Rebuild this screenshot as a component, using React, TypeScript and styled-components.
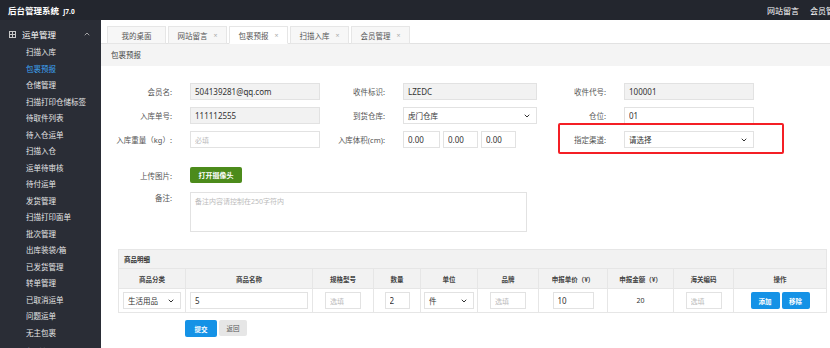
import styled, { createGlobalStyle } from 'styled-components';
import { ChevronDown, ChevronUp } from 'lucide-react';

const GlobalStyle = createGlobalStyle`
  html, body {
    margin: 0;
    padding: 0;
    width: 830px;
    height: 348px;
    overflow: hidden;
    font-family: "Noto Sans", "Noto Sans CJK SC", sans-serif;
    color: #333;
  }
  * {
    box-sizing: border-box;
  }
`;

const menuItems = [
  '扫描入库',
  '包裹预报',
  '仓储管理',
  '扫描打印仓储标签',
  '待取件列表',
  '待入仓运单',
  '扫描入仓',
  '运单待审核',
  '待付运单',
  '发货管理',
  '扫描打印面单',
  '批次管理',
  '出库装袋/箱',
  '已发货管理',
  '转单管理',
  '已取消运单',
  '问题运单',
  '无主包裹',
];

const tabs = [
  { name: '我的桌面', closable: false },
  { name: '网站留言', closable: true },
  { name: '包裹预报', closable: true, active: true },
  { name: '扫描入库', closable: true },
  { name: '会员管理', closable: true },
];

const columns = [
  { title: '商品分类', width: 67 },
  { title: '商品名称', width: 127 },
  { title: '规格型号', width: 61 },
  { title: '数量', width: 47 },
  { title: '单位', width: 57 },
  { title: '品牌', width: 61 },
  { title: '申报单价（¥）', width: 69 },
  { title: '申报金额（¥）', width: 66 },
  { title: '海关编码', width: 60 },
  { title: '操作', width: 93 },
];

function GridIcon() {
  return (
    <svg width="7" height="7" viewBox="0 0 7 7">
      <rect x="0.5" y="0.5" width="6" height="6" fill="none" stroke="#c8c8c8" />
      <line x1="0.5" y1="3.5" x2="6.5" y2="3.5" stroke="#c8c8c8" />
      <line x1="3.5" y1="0.5" x2="3.5" y2="6.5" stroke="#c8c8c8" />
    </svg>
  );
}

function App() {
  return (
    <Page>
      <GlobalStyle />
      <TopBar>
        <Brand>
          后台管理系统 <Version>J7.0</Version>
        </Brand>
        <TopNav>
          <TopNavItem>网站留言</TopNavItem>
          <TopNavItem>会员管理</TopNavItem>
        </TopNav>
      </TopBar>
      <Body>
        <Sidebar>
          <MenuHead>
            <GridIcon />
            <MenuHeadText>运单管理</MenuHeadText>
            <ChevronUp size={8} strokeWidth={2.5} color="#bbb" />
          </MenuHead>
          {menuItems.map((item) => (
            <MenuItem key={item} $active={item === '包裹预报'}>
              {item}
            </MenuItem>
          ))}
          <MenuHead>
            <GridIcon />
            <MenuHeadText>财务管理</MenuHeadText>
            <ChevronDown size={8} strokeWidth={2.5} color="#bbb" />
          </MenuHead>
        </Sidebar>
        <Main>
          <TabBar>
            {tabs.map((t) => (
              <Tab key={t.name} $active={!!t.active}>
                {t.name}
                {t.closable && <TabClose>×</TabClose>}
              </Tab>
            ))}
          </TabBar>
          <Crumb>包裹预报</Crumb>
          <Panel>
            <FormRow>
              <Field>
                <Label $w={89}>会员名:</Label>
                <TextInput $w={130} $readonly readOnly value="504139281@qq.com" />
              </Field>
              <Field>
                <Label $w={83}>收件标识:</Label>
                <TextInput $w={134} $readonly readOnly value="LZEDC" />
              </Field>
              <Field>
                <Label $w={87}>收件代号:</Label>
                <TextInput $w={130} $readonly readOnly value="100001" />
              </Field>
            </FormRow>
            <FormRow>
              <Field>
                <Label $w={89}>入库单号:</Label>
                <TextInput $w={130} $readonly readOnly value="111112555" />
              </Field>
              <Field>
                <Label $w={83}>到货仓库:</Label>
                <SelectBox $w={134}>
                  虎门仓库
                  <ChevronDown size={8} strokeWidth={3} color="#333" />
                </SelectBox>
              </Field>
              <Field>
                <Label $w={87}>仓位:</Label>
                <TextInput $w={130} readOnly value="01" />
              </Field>
            </FormRow>
            <FormRow>
              <Field>
                <Label $w={89}>入库重量（kg）:</Label>
                <TextInput $w={130} placeholder="必填" />
              </Field>
              <Field>
                <Label $w={83}>入库体积(cm):</Label>
                <VolumeGroup>
                  <TextInput $w={37} readOnly value="0.00" />
                  <TextInput $w={35} readOnly value="0.00" />
                  <TextInput $w={35} readOnly value="0.00" />
                </VolumeGroup>
              </Field>
              <ChannelField>
                <Label $w={87}>指定渠道:</Label>
                <SelectBox $w={130}>
                  请选择
                  <ChevronDown size={8} strokeWidth={3} color="#333" />
                </SelectBox>
                <RedFrame />
              </ChannelField>
            </FormRow>
            <UploadRow>
              <Label $w={89}>上传图片:</Label>
              <GreenButton>打开摄像头</GreenButton>
            </UploadRow>
            <RemarkRow>
              <Label $w={89}>备注:</Label>
              <Remark placeholder="备注内容请控制在250字符内" />
            </RemarkRow>
            <GoodsTable>
              <colgroup>
                {columns.map((c) => (
                  <col key={c.title} style={{ width: c.width }} />
                ))}
              </colgroup>
              <thead>
                <tr>
                  <Caption colSpan={columns.length}>商品明细</Caption>
                </tr>
                <tr>
                  {columns.map((c) => (
                    <HeadCell key={c.title}>{c.title}</HeadCell>
                  ))}
                </tr>
              </thead>
              <tbody>
                <tr>
                  <Cell>
                    <SelectBox $w={58}>
                      生活用品
                      <ChevronDown size={8} strokeWidth={3} color="#333" />
                    </SelectBox>
                  </Cell>
                  <Cell>
                    <TextInput $w={118} readOnly value="5" />
                  </Cell>
                  <Cell>
                    <TextInput $w={36} placeholder="选填" />
                  </Cell>
                  <Cell>
                    <TextInput $w={25} readOnly value="2" />
                  </Cell>
                  <Cell>
                    <SelectBox $w={50}>
                      件
                      <ChevronDown size={8} strokeWidth={3} color="#333" />
                    </SelectBox>
                  </Cell>
                  <Cell>
                    <TextInput $w={36} placeholder="选填" />
                  </Cell>
                  <Cell>
                    <TextInput $w={41} readOnly value="10" />
                  </Cell>
                  <Cell>20</Cell>
                  <Cell>
                    <TextInput $w={36} placeholder="选填" />
                  </Cell>
                  <Cell>
                    <ActionGroup>
                      <BlueButton $w={29}>添加</BlueButton>
                      <BlueButton $w={28}>移除</BlueButton>
                    </ActionGroup>
                  </Cell>
                </tr>
              </tbody>
            </GoodsTable>
            <SubmitRow>
              <BlueButton $w={32}>提交</BlueButton>
              <GreyButton>返回</GreyButton>
            </SubmitRow>
          </Panel>
        </Main>
      </Body>
    </Page>
  );
}

const Page = styled.div`
  display: flex;
  flex-direction: column;
  width: 830px;
  height: 348px;
  overflow: hidden;
`;

const TopBar = styled.div`
  display: flex;
  align-items: center;
  height: 20px;
  padding-left: 8px;
  background: #23262e;
  color: #fff;
  flex-shrink: 0;
`;

const Brand = styled.div`
  flex: 1;
  font-size: 8.5px;
  font-weight: 700;
  white-space: nowrap;
`;

const Version = styled.span`
  font-size: 6.5px;
  margin-left: 2px;
`;

const TopNav = styled.div`
  display: flex;
  gap: 11px;
  width: 63px;
  flex-shrink: 0;
  overflow: hidden;
  white-space: nowrap;
`;

const TopNavItem = styled.span`
  font-size: 8px;
  color: #fff;
  flex-shrink: 0;
`;

const Body = styled.div`
  display: flex;
  flex: 1;
  min-height: 0;
`;

const Sidebar = styled.div`
  width: 101px;
  flex-shrink: 0;
  background: #2a2d36;
  overflow: hidden;
  padding-top: 4px;
`;

const MenuHead = styled.div`
  display: flex;
  align-items: center;
  height: 20px;
  padding: 0 10px 0 9px;
  color: #fff;
`;

const MenuHeadText = styled.span`
  flex: 1;
  margin-left: 6px;
  font-size: 8.5px;
`;

const MenuItem = styled.div<{ $active: boolean }>`
  height: 16.5px;
  line-height: 16.5px;
  padding-left: 26px;
  font-size: 7.5px;
  white-space: nowrap;
  color: ${(p) => (p.$active ? '#3da4f5' : '#e6e6e6')};
`;

const Main = styled.div`
  display: flex;
  flex-direction: column;
  flex: 1;
  min-width: 0;
  background: #f4f4f4;
`;

const TabBar = styled.div`
  display: flex;
  align-items: flex-end;
  gap: 2px;
  height: 24px;
  padding-left: 6px;
  background: #fff;
  border-bottom: 1px solid #e2e2e2;
  flex-shrink: 0;
`;

const Tab = styled.div<{ $active: boolean }>`
  display: flex;
  align-items: center;
  justify-content: center;
  gap: 6px;
  width: 59px;
  height: 18px;
  margin-bottom: -1px;
  font-size: 7.5px;
  color: #555;
  background: ${(p) => (p.$active ? '#fff' : '#f7f7f7')};
  border: 1px solid #e6e6e6;
  border-bottom-color: ${(p) => (p.$active ? '#fff' : '#e6e6e6')};
`;

const TabClose = styled.span`
  font-size: 7px;
  color: #aaa;
`;

const Crumb = styled.div`
  height: 22px;
  line-height: 22px;
  padding-left: 10px;
  font-size: 7.5px;
  color: #444;
  flex-shrink: 0;
`;

const Panel = styled.div`
  flex: 1;
  background: #fff;
  padding-top: 17px;
`;

const FormRow = styled.div`
  display: flex;
  height: 17px;
  margin-bottom: 7px;
`;

const Field = styled.div`
  display: flex;
  align-items: center;
`;

const ChannelField = styled(Field)`
  position: relative;
`;

const RedFrame = styled.div`
  position: absolute;
  left: 21px;
  top: -8px;
  width: 226px;
  height: 31px;
  border: 2px solid #f41f25;
  border-radius: 2px;
  pointer-events: none;
`;

const Label = styled.label<{ $w: number }>`
  width: ${(p) => p.$w}px;
  flex-shrink: 0;
  padding-right: 18px;
  text-align: right;
  font-size: 7.5px;
  color: #555;
  white-space: nowrap;
`;

const TextInput = styled.input<{ $w: number; $readonly?: boolean }>`
  width: ${(p) => p.$w}px;
  height: 17px;
  padding: 0 4px;
  border: 1px solid #e2e2e2;
  background: ${(p) => (p.$readonly ? '#f2f2f2' : '#fff')};
  font-family: "Noto Sans", "Noto Sans CJK SC", sans-serif;
  font-size: 8px;
  color: #333;
  outline: none;

  &::placeholder {
    color: #bbb;
    font-size: 7px;
  }
`;

const SelectBox = styled.div<{ $w: number }>`
  display: inline-flex;
  align-items: center;
  justify-content: space-between;
  width: ${(p) => p.$w}px;
  height: 17px;
  padding: 0 5px 0 4px;
  border: 1px solid #e2e2e2;
  background: #fff;
  font-size: 7.5px;
  color: #333;
  text-align: left;
  vertical-align: middle;
`;

const VolumeGroup = styled.div`
  display: flex;
  gap: 3px;
  width: 134px;
`;

const UploadRow = styled.div`
  display: flex;
  align-items: center;
  margin-top: 19px;
  height: 16px;
`;

const GreenButton = styled.button`
  width: 52px;
  height: 16px;
  padding: 0;
  border: none;
  border-radius: 2px;
  background: #4c8b1b;
  color: #fff;
  font-family: "Noto Sans CJK SC", sans-serif;
  font-size: 7px;
  font-weight: 700;
`;

const RemarkRow = styled.div`
  display: flex;
  align-items: flex-start;
  margin-top: 9px;
`;

const Remark = styled.textarea`
  width: 337px;
  height: 40px;
  padding: 3px 4px;
  border: 1px solid #e2e2e2;
  resize: none;
  font-family: "Noto Sans", "Noto Sans CJK SC", sans-serif;
  font-size: 7px;
  outline: none;

  &::placeholder {
    color: #bbb;
  }
`;

const GoodsTable = styled.table`
  margin: 17px 0 0 17px;
  width: 708px;
  border-collapse: collapse;
  table-layout: fixed;
`;

const Caption = styled.th`
  height: 19px;
  padding-left: 5px;
  text-align: left;
  font-size: 6.5px;
  font-weight: 700;
  color: #333;
  background: #f2f2f2;
  border: 1px solid #e6e6e6;
`;

const HeadCell = styled.th`
  height: 20px;
  padding: 0;
  text-align: center;
  font-size: 6.5px;
  font-weight: 700;
  color: #444;
  background: #f2f2f2;
  border: 1px solid #e6e6e6;
  white-space: nowrap;
`;

const Cell = styled.td`
  height: 24px;
  padding: 0;
  text-align: center;
  font-size: 7px;
  color: #333;
  border: 1px solid #e6e6e6;
`;

const ActionGroup = styled.div`
  display: flex;
  justify-content: center;
  gap: 2px;
`;

const BlueButton = styled.button<{ $w: number }>`
  width: ${(p) => p.$w}px;
  height: 17px;
  padding: 0;
  border: none;
  border-radius: 2px;
  background: #1592e6;
  color: #fff;
  font-family: "Noto Sans CJK SC", sans-serif;
  font-size: 6.5px;
  font-weight: 700;
`;

const SubmitRow = styled.div`
  display: flex;
  gap: 2px;
  margin: 7px 0 0 84px;
  height: 16px;
`;

const GreyButton = styled.button`
  width: 28px;
  height: 16px;
  padding: 0;
  border: none;
  border-radius: 2px;
  background: #e6e6e6;
  color: #555;
  font-family: "Noto Sans CJK SC", sans-serif;
  font-size: 6.5px;
`;

export default App;
